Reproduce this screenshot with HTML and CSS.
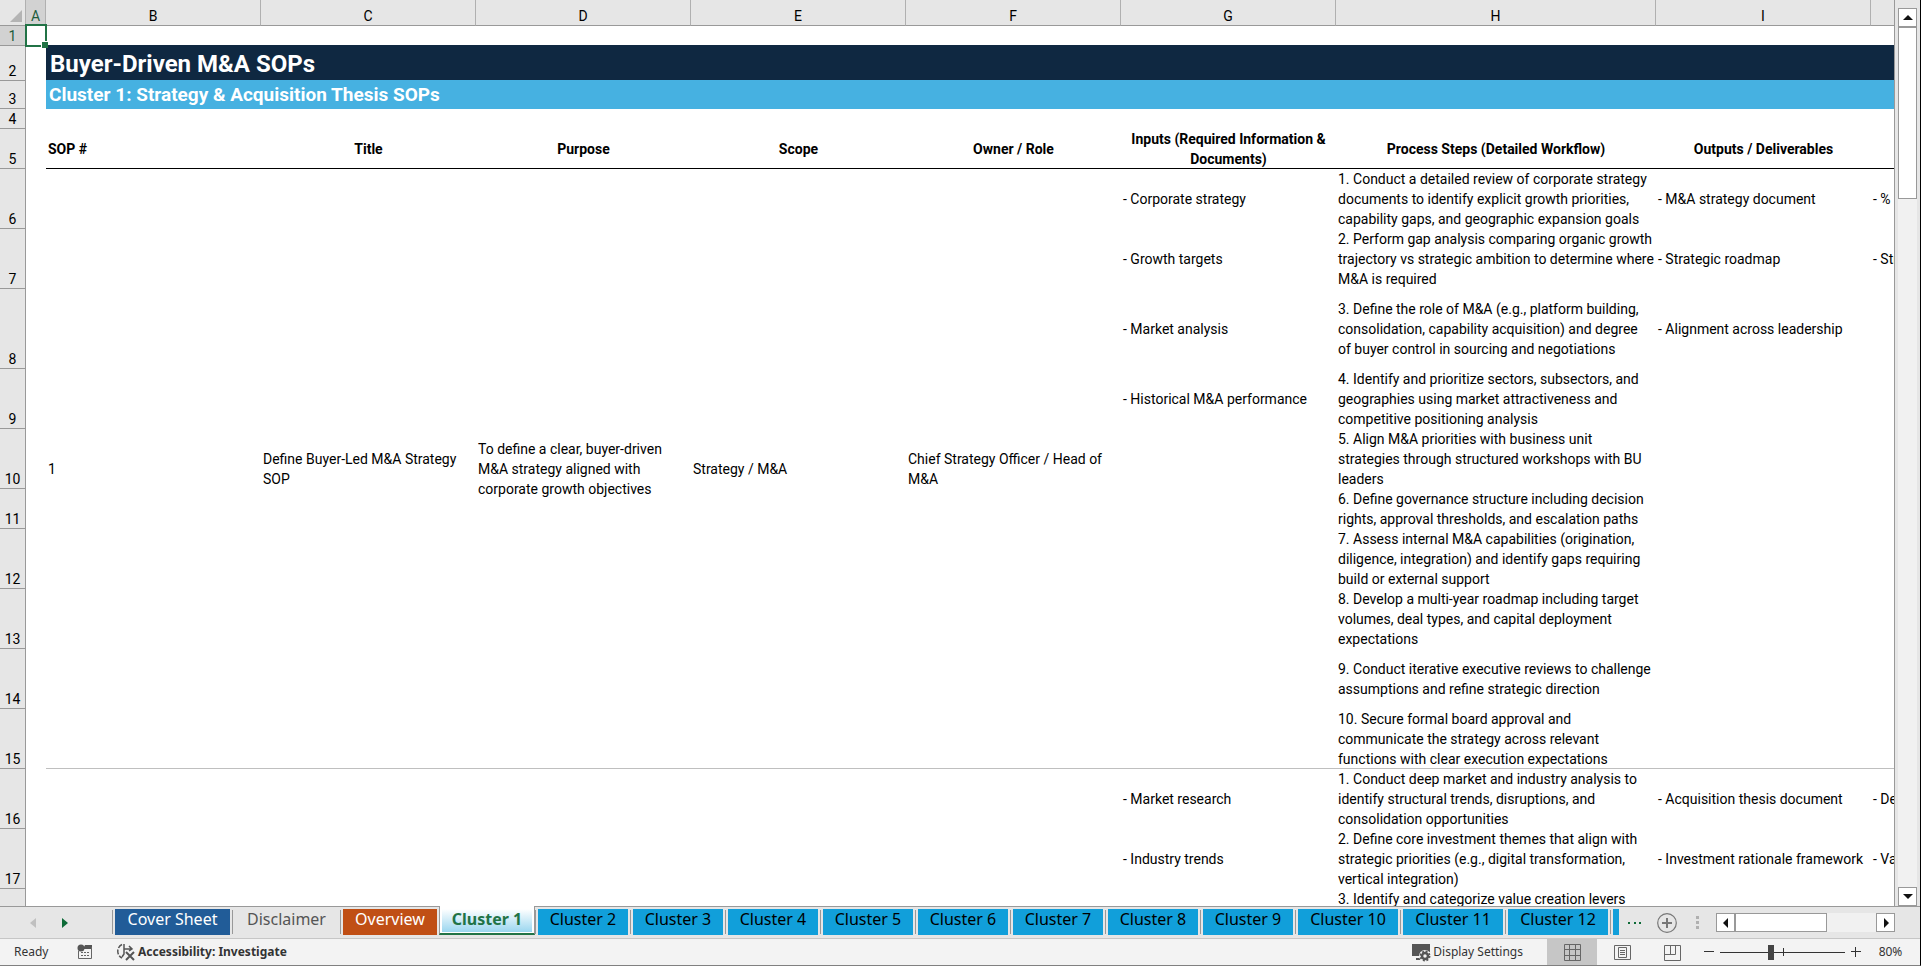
FILE: index.html
```html
<!DOCTYPE html>
<html lang="en">
<head>
    <meta charset="utf-8">
    <title>Buyer-Driven M&amp;A SOPs</title>
    <link rel="stylesheet" href="styles.css">
</head>
<body>
    <div class="workspace">
        <div class="pane">
            <table class="sheet">
                <colgroup>
                    <col class="col-head">
                    <col class="col-a">
                    <col class="col-std"><col class="col-std"><col class="col-std">
                    <col class="col-std"><col class="col-std"><col class="col-std">
                    <col class="col-wide">
                    <col class="col-std"><col class="col-std">
                </colgroup>
                <thead>
                    <tr class="letters">
                        <th class="corner"><svg width="12" height="12" viewBox="0 0 12 12"><path d="M12 0v12H0z" fill="#b4b4b4"/></svg></th>
                        <th class="selected">A</th>
                        <th>B</th><th>C</th><th>D</th><th>E</th><th>F</th><th>G</th><th>H</th><th>I</th><th></th>
                    </tr>
                </thead>
                <tbody>
                    <tr class="h20 above-title">
                        <th class="selected">1</th>
                        <td class="active-cell"><span class="cursor"></span></td>
                        <td colspan="9"></td>
                    </tr>
                    <tr class="h35 title">
                        <th>2</th><td></td>
                        <td colspan="9">Buyer-Driven M&amp;A SOPs</td>
                    </tr>
                    <tr class="h28 subtitle">
                        <th>3</th><td></td>
                        <td colspan="9">Cluster 1: Strategy &amp; Acquisition Thesis SOPs</td>
                    </tr>
                    <tr class="h20"><th>4</th><td colspan="10"></td></tr>
                    <tr class="h40 headings">
                        <th>5</th><td></td>
                        <td class="left">SOP #</td>
                        <td>Title</td>
                        <td>Purpose</td>
                        <td>Scope</td>
                        <td>Owner / Role</td>
                        <td>Inputs (Required Information &amp;<br>Documents)</td>
                        <td>Process Steps (Detailed Workflow)</td>
                        <td>Outputs / Deliverables</td>
                        <td></td>
                    </tr>
                    <tr class="h60">
                        <th>6</th><td></td>
                        <td class="merged" rowspan="10">1</td>
                        <td class="merged" rowspan="10">Define Buyer-Led M&amp;A Strategy<br>SOP</td>
                        <td class="merged" rowspan="10">To define a clear, buyer-driven<br>M&amp;A strategy aligned with<br>corporate growth objectives</td>
                        <td class="merged" rowspan="10">Strategy / M&amp;A</td>
                        <td class="merged" rowspan="10">Chief Strategy Officer / Head of<br>M&amp;A</td>
                        <td>- Corporate strategy</td>
                        <td>1. Conduct a detailed review of corporate strategy<br>documents to identify explicit growth priorities,<br>capability gaps, and geographic expansion goals</td>
                        <td>- M&amp;A strategy document</td>
                        <td>- %</td>
                    </tr>
                    <tr class="h60">
                        <th>7</th><td></td>
                        <td>- Growth targets</td>
                        <td>2. Perform gap analysis comparing organic growth<br>trajectory vs strategic ambition to determine where<br>M&amp;A is required</td>
                        <td>- Strategic roadmap</td>
                        <td>- Str</td>
                    </tr>
                    <tr class="h80">
                        <th>8</th><td></td>
                        <td>- Market analysis</td>
                        <td>3. Define the role of M&amp;A (e.g., platform building,<br>consolidation, capability acquisition) and degree<br>of buyer control in sourcing and negotiations</td>
                        <td>- Alignment across leadership</td>
                        <td></td>
                    </tr>
                    <tr class="h60">
                        <th>9</th><td></td>
                        <td>- Historical M&amp;A performance</td>
                        <td>4. Identify and prioritize sectors, subsectors, and<br>geographies using market attractiveness and<br>competitive positioning analysis</td>
                        <td></td><td></td>
                    </tr>
                    <tr class="h60">
                        <th>10</th><td></td><td></td>
                        <td>5. Align M&amp;A priorities with business unit<br>strategies through structured workshops with BU<br>leaders</td>
                        <td></td><td></td>
                    </tr>
                    <tr class="h40">
                        <th>11</th><td></td><td></td>
                        <td>6. Define governance structure including decision<br>rights, approval thresholds, and escalation paths</td>
                        <td></td><td></td>
                    </tr>
                    <tr class="h60">
                        <th>12</th><td></td><td></td>
                        <td>7. Assess internal M&amp;A capabilities (origination,<br>diligence, integration) and identify gaps requiring<br>build or external support</td>
                        <td></td><td></td>
                    </tr>
                    <tr class="h60">
                        <th>13</th><td></td><td></td>
                        <td>8. Develop a multi-year roadmap including target<br>volumes, deal types, and capital deployment<br>expectations</td>
                        <td></td><td></td>
                    </tr>
                    <tr class="h60">
                        <th>14</th><td></td><td></td>
                        <td>9. Conduct iterative executive reviews to challenge<br>assumptions and refine strategic direction</td>
                        <td></td><td></td>
                    </tr>
                    <tr class="h60 group-end">
                        <th>15</th><td></td><td></td>
                        <td>10. Secure formal board approval and<br>communicate the strategy across relevant<br>functions with clear execution expectations</td>
                        <td></td><td></td>
                    </tr>
                    <tr class="h60">
                        <th>16</th><td></td><td colspan="5"></td>
                        <td>- Market research</td>
                        <td>1. Conduct deep market and industry analysis to<br>identify structural trends, disruptions, and<br>consolidation opportunities</td>
                        <td>- Acquisition thesis document</td>
                        <td>- De</td>
                    </tr>
                    <tr class="h60">
                        <th>17</th><td></td><td colspan="5"></td>
                        <td>- Industry trends</td>
                        <td>2. Define core investment themes that align with<br>strategic priorities (e.g., digital transformation,<br>vertical integration)</td>
                        <td>- Investment rationale framework</td>
                        <td>- Va</td>
                    </tr>
                    <tr class="h60">
                        <th></th><td></td><td colspan="5"></td>
                        <td></td>
                        <td class="top">3. Identify and categorize value creation levers</td>
                        <td></td><td></td>
                    </tr>
                </tbody>
            </table>
        </div>
        <div class="vscroll">
            <button class="arrow" aria-label="Scroll up"><svg width="10" height="6" viewBox="0 0 10 6"><path d="M5 0l5 5H0z" fill="#111"/></svg></button>
            <div class="vthumb"></div>
            <button class="arrow down" aria-label="Scroll down"><svg width="10" height="6" viewBox="0 0 10 6"><path d="M0 0h10L5 5z" fill="#111"/></svg></button>
        </div>
    </div>

    <div class="tabbar">
        <div class="tabnav">
            <button aria-label="Previous sheet"><svg width="6" height="10" viewBox="0 0 6 10"><path d="M6 0v10L0 5z" fill="#c0c0c0"/></svg></button>
            <button aria-label="Next sheet"><svg width="6" height="10" viewBox="0 0 6 10"><path d="M0 0l6 5-6 5z" fill="#0e6b38"/></svg></button>
        </div>
        <div class="tabs">
            <button class="tab cover"><span>Cover Sheet</span></button>
            <button class="tab plain"><span>Disclaimer</span></button>
            <button class="tab overview"><span>Overview</span></button>
            <button class="tab current"><span>Cluster 1</span></button>
            <button class="tab"><span>Cluster 2</span></button>
            <button class="tab"><span>Cluster 3</span></button>
            <button class="tab"><span>Cluster 4</span></button>
            <button class="tab"><span>Cluster 5</span></button>
            <button class="tab"><span>Cluster 6</span></button>
            <button class="tab"><span>Cluster 7</span></button>
            <button class="tab"><span>Cluster 8</span></button>
            <button class="tab"><span>Cluster 9</span></button>
            <button class="tab wide"><span>Cluster 10</span></button>
            <button class="tab wide"><span>Cluster 11</span></button>
            <button class="tab wide"><span>Cluster 12</span></button>
            <button class="tab cut" aria-label="Cluster 13"><span></span></button>
        </div>
        <button class="more" aria-label="More sheets"><svg width="14" height="4" viewBox="0 0 14 4"><path d="M0 1h2v2H0zM6 1h2v2H6zM11 1h2v2h-2z" fill="#0e6b38"/></svg></button>
        <button class="add" aria-label="New sheet"><svg width="20" height="20" viewBox="0 0 20 20" fill="none" stroke="#777"><circle cx="10" cy="10" r="9.3" stroke-width="1.2"/><path d="M10 5v10M5 10h10" stroke-width="2"/></svg></button>
        <svg class="grip" width="4" height="14" viewBox="0 0 4 14"><path d="M0 0h3v3H0zM0 5h3v3H0zM0 10h3v3H0z" fill="#b0b0b0"/></svg>
        <div class="hscroll">
            <button class="arrow" aria-label="Scroll left"><svg width="6" height="10" viewBox="0 0 6 10"><path d="M5 0v10L0 5z" fill="#111"/></svg></button>
            <div class="hthumb"></div>
            <button class="arrow right" aria-label="Scroll right"><svg width="6" height="10" viewBox="0 0 6 10"><path d="M1 0l5 5-5 5z" fill="#111"/></svg></button>
        </div>
    </div>

    <div class="statusbar">
        <span class="ready">Ready</span>
        <svg class="macro" width="16" height="16" viewBox="0 0 16 16">
            <path d="M8 1h7v4H6z" fill="#555"/><path d="M1.500 7v7.500h13V3" fill="none" stroke="#666"/>
            <circle cx="4" cy="4" r="3.500" fill="#555"/>
            <path d="M4 8.500h2M7 8.500h2M10 8.500h2M4 11.500h2M7 11.500h2M10 11.500h2" stroke="#666"/>
        </svg>
        <button class="access">
            <svg width="20" height="18" viewBox="0 0 20 18" fill="none" stroke="#555" stroke-width="1.500">
                <path d="M6 1.500A7.500 7.500 0 0 0 6 15" stroke-dasharray="5 1.500"/>
                <path d="M8 1v5h7M13 3l3 3-3 2M8 6v5l-2 3"/>
                <path d="M10 9l8 8M18 9l-8 8" stroke-width="2"/>
            </svg>
            Accessibility: Investigate
        </button>
        <button class="display">
            <svg width="19" height="19" viewBox="0 0 19 19">
                <path d="M0 1h18v8H9l-2 4H0z" fill="#555"/><path d="M4 16h4" stroke="#555" stroke-width="2"/>
                <circle cx="13" cy="13" r="6" fill="#f3f3f3"/>
                <circle cx="13" cy="13" r="3" fill="none" stroke="#555" stroke-width="2.500"/>
                <circle cx="13" cy="13" r="4.700" fill="none" stroke="#555" stroke-width="1.500" stroke-dasharray="2 1.700"/>
            </svg>
            Display Settings
        </button>
        <button class="view on" aria-label="Normal"><svg width="17" height="17" viewBox="0 0 17 17" fill="none" stroke="#666"><path d="M.5.5h16v16H.5zM.5 5.500h16M.5 11.500h16M5.500.5v16M11.500.5v16"/></svg></button>
        <button class="view" aria-label="Page Layout"><svg width="17" height="17" viewBox="0 0 17 17" fill="none" stroke="#666"><path d="M.5 1.500h16v14H.5zM4.500 3.500h8v10h-8zM6 6.500h5M6 8.500h5M6 10.500h5"/></svg></button>
        <button class="view" aria-label="Page Break Preview"><svg width="17" height="17" viewBox="0 0 17 17" fill="none" stroke="#666"><path d="M.5 1.500h16v15H.5zM.5 10.500h11v-9M6.500 1.500v9"/></svg></button>
        <button class="zoom-step" aria-label="Zoom out"><svg width="10" height="10" viewBox="0 0 10 10"><path d="M0 4.500h10" stroke="#333"/></svg></button>
        <div class="slider"><input type="range" min="10" max="190" value="82" aria-label="Zoom"></div>
        <button class="zoom-step" aria-label="Zoom in"><svg width="10" height="10" viewBox="0 0 10 10"><path d="M0 4.500h10M4.500 0v10" stroke="#333"/></svg></button>
        <button class="percent">80%</button>
    </div>
</body>
</html>
```
FILE: styles.css
```css
* {
    box-sizing: border-box;
}
body {
    margin: 0;
    height: 100vh;
    display: flex;
    flex-direction: column;
    overflow: hidden;
    background: #e6e6e6;
    border-right: 1px solid #000;
    border-bottom: 1px solid #808080;
    font-family: "Noto Sans", sans-serif;
    color: #000;
}
button {
    margin: 0;
    padding: 0;
    border: 0;
    background: none;
    font: inherit;
    color: inherit;
}
svg {
    display: block;
    flex: none;
}

/* Grid */
.workspace {
    flex: 1;
    min-height: 0;
    display: flex;
}
.pane {
    flex: 1;
    min-width: 0;
    overflow: hidden;
    background: #fff;
    border-right: 1px solid #999;
}
.sheet {
    width: 2086px;
    table-layout: fixed;
    border-collapse: separate;
    border-spacing: 0;
    font: 14px/20px Roboto, sans-serif;
}
.col-head { width: 26px; }
.col-a { width: 20px; }
.col-std { width: 215px; }
.col-wide { width: 320px; }
.sheet th, .sheet td {
    padding: 0;
    white-space: nowrap;
}
.sheet td {
    padding: 0 2px;
    text-align: left;
}
.sheet th {
    background: #e6e6e6;
    border-right: 1px solid #999;
    border-bottom: 1px solid #999;
    font-weight: normal;
    line-height: 18px;
    vertical-align: bottom;
}
.letters th {
    height: 26px;
    border-right-color: #b0b0b0;
}
.sheet .corner {
    padding: 0 0 3px 10px;
}
.sheet .selected {
    background: #d2d2d2;
    color: #1e5c3c;
}
.h20 { height: 20px; }
.h28 { height: 28px; }
.h35 { height: 35px; }
.h40 { height: 40px; }
.h60 { height: 60px; }
.h80 { height: 80px; }
.sheet .active-cell {
    position: relative;
}
.cursor {
    position: absolute;
    inset: -2px -1px -1px -1px;
    border: 2px solid #217346;
    z-index: 1;
}
.cursor::after {
    content: "";
    position: absolute;
    right: -3px;
    bottom: -3px;
    width: 6px;
    height: 6px;
    background: #217346;
    border: 1px solid #fff;
    border-width: 1px 0 0 1px;
}
.above-title td:last-child {
    border-bottom: 1px solid #0f2841;
}
.title td:last-child {
    background: #0f2841;
    border-bottom: 1px solid #46b1e1;
    color: #fff;
    font-size: 24px;
    line-height: 32px;
    font-weight: bold;
    padding: 2px 4px 0;
}
.subtitle td:last-child {
    background: #46b1e1;
    color: #fff;
    font-size: 19px;
    line-height: 24px;
    font-weight: bold;
    padding-left: 3px;
}
.headings td {
    font-weight: bold;
    text-align: center;
}
/* inset lines, so the rows keep their height */
.headings td:nth-child(n+3) {
    box-shadow: inset 0 -1px #000;
}
.headings .left {
    text-align: left;
}
.merged, .group-end td:nth-child(n+3) {
    box-shadow: inset 0 -1px #bfbfbf;
}
.sheet .top {
    vertical-align: top;
}

/* Scrollbars */
.vscroll {
    flex: none;
    width: 25px;
    padding: 8px 3px 0;
    display: flex;
    flex-direction: column;
    background: linear-gradient(#f1f1f1, #f1f1f1) 3px 8px / 19px 100% no-repeat;
}
.arrow {
    flex: none;
    width: 19px;
    height: 19px;
    display: flex;
    align-items: center;
    justify-content: center;
    background: #fff;
    border: 1px solid #999;
}
.vthumb {
    height: 172px;
    background: #fff;
    border: 1px solid #999;
}
.down {
    margin-top: auto;
}

/* Sheet tabs */
.tabbar {
    flex: none;
    height: 33px;
    display: flex;
    align-items: center;
    border-top: 1px solid #999;
    border-bottom: 1px solid #c6c6c6;
}
.tabnav {
    width: 112px;
    display: flex;
    gap: 26px;
    padding-left: 30px;
}
.tabs {
    display: flex;
    height: 31px;
}
.tab {
    width: 95px;
    padding: 2px 2px 3px 3px;
    font-size: 16px;
    line-height: 20px;
    text-align: center;
    position: relative;
}
.tab span {
    display: block;
    height: 26px;
    background: #119fda;
}
.tab::before {
    content: "";
    position: absolute;
    left: 0;
    top: 3px;
    width: 1px;
    height: 24px;
    background: #999;
}
.cover { width: 120px; }
.cover span { background: #215c98; color: #fff; }
.plain { width: 108px; }
.plain span { background: none; color: #555; }
.overview { width: 99px; }
.overview span { background: #c04f15; color: #fff; }
.wide { width: 105px; }
.cut { width: 9px; padding-right: 0; }
.current {
    width: 96px;
    margin-top: -1px;
    height: 29px;
    background: #fff;
    border: 1px solid #999;
    border-top: 0;
    border-bottom: 2px solid #217346;
    color: #217346;
    font-weight: bold;
    padding: 3px 2px 1px;
}
.current span {
    height: 23px;
    background: linear-gradient(#fff, #9ad6ef);
}
.current::before {
    display: none;
}
.more { margin-left: 9px; }
.add { margin-left: 15px; }
.grip { margin-left: 19px; }
.hscroll {
    flex: 1;
    display: flex;
    margin: 0 25px 0 16px;
    background: #f1f1f1;
}
.hthumb {
    width: 92px;
    background: #fff;
    border: 1px solid #999;
}
.right {
    margin-left: auto;
}

/* Status bar */
.statusbar {
    flex: none;
    height: 26px;
    display: flex;
    align-items: center;
    background: #f3f3f3;
    font-size: 12px;
    line-height: 24px;
    color: #333;
}
.ready { width: 63px; padding-left: 14px; }
.macro { margin-left: 14px; }
.access {
    display: flex;
    align-items: center;
    gap: 2px;
    margin-left: 23px;
    font-weight: bold;
}
.display {
    display: flex;
    align-items: center;
    gap: 2px;
    margin-left: auto;
    margin-right: 24px;
}
.view {
    width: 50px;
    height: 26px;
    display: flex;
    align-items: center;
    justify-content: center;
}
.on { background: #c6c6c6; }
.zoom-step { width: 10px; }
.view + .zoom-step { margin-left: 7px; }
.slider {
    width: 125px;
    margin: 0 6px;
    display: flex;
    position: relative;
}
.slider::before {
    content: "";
    position: absolute;
    left: 50%;
    top: 4px;
    width: 1px;
    height: 8px;
    background: #333;
}
.slider input {
    appearance: none;
    width: 100%;
    height: 16px;
    margin: 0;
    background: linear-gradient(#333, #333) center / 100% 1px no-repeat;
}
.slider input::-webkit-slider-thumb {
    appearance: none;
    width: 6px;
    height: 15px;
    background: #444;
}
.percent {
    width: 59px;
    text-align: center;
}
```
